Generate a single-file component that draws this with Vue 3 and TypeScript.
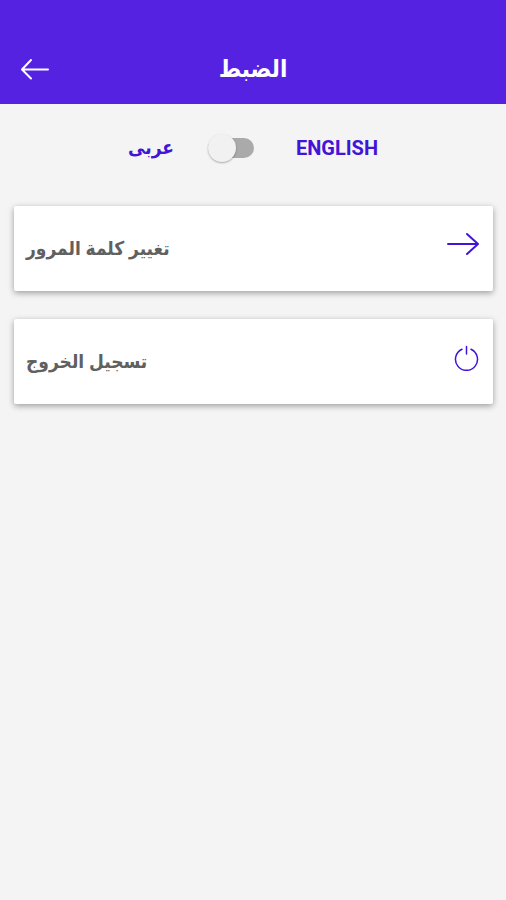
<script setup lang="ts">
import { ref } from 'vue'

const english = ref(false)
</script>

<template>
  <main class="screen" dir="ltr" lang="ar">
    <header class="bar">
      <button class="back" type="button" aria-label="رجوع">
        <svg width="30" height="22" viewBox="0 0 30 22" fill="none" stroke="currentColor" stroke-width="2" stroke-linecap="round" stroke-linejoin="round">
          <path d="M28 11.500H2M11 2L2 11.500l9 9" />
        </svg>
      </button>
      <h1 class="title" dir="rtl">الضبط</h1>
    </header>

    <div class="language">
      <label class="name arabic" for="language-switch" dir="rtl">عربى</label>
      <input id="language-switch" v-model="english" class="switch" type="checkbox" role="switch" />
      <label class="name" for="language-switch" lang="en">ENGLISH</label>
    </div>

    <div class="list">
      <button class="card" type="button">
        <span dir="rtl">تغيير كلمة المرور</span>
        <svg width="34" height="26" viewBox="0 0 34 26" fill="none" stroke="currentColor" stroke-width="2" stroke-linecap="round" stroke-linejoin="round">
          <path d="M3 12h30M22 2l11 10-11 10" />
        </svg>
      </button>
      <button class="card" type="button">
        <span dir="rtl">تسجيل الخروج</span>
        <svg width="26" height="26" viewBox="0 0 26 26" fill="none" stroke="currentColor" stroke-width="1.5" stroke-linecap="round">
          <path d="M13.500 1.500v7.500M9 4.300a11 11 0 1 0 9 0" />
        </svg>
      </button>
    </div>
  </main>
</template>

<style>
body {
  background: #f4f4f4;
}
</style>

<style scoped>
.screen {
  min-height: 100vh;
  background: #f4f4f4;
  color: #4314d8;
  font-family: Roboto, "DejaVu Sans Condensed", "DejaVu Sans", sans-serif;
}
.bar {
  display: grid;
  grid-template-columns: 52px 1fr 52px;
  align-items: center;
  box-sizing: border-box;
  height: 104px;
  padding-top: 34px;
  background: #5522e2;
  color: #fff;
}
.back {
  display: flex;
  justify-content: flex-end;
  padding: 0 2px;
  border: 0;
  background: none;
  color: inherit;
}
.title {
  margin: 0;
  font-size: 24px;
  line-height: 32px;
  font-weight: 700;
  text-align: center;
}
.language {
  display: flex;
  align-items: center;
  justify-content: center;
  height: 88px;
}
.name {
  font-size: 20px;
  line-height: 28px;
  font-weight: 700;
}
.arabic {
  font-size: 19px;
}
.switch {
  appearance: none;
  display: flex;
  align-items: center;
  width: 46px;
  height: 20px;
  margin: 0 42px 0 34px;
  border-radius: 10px;
  background: #aaa;
}
.switch::before {
  content: "";
  width: 28px;
  height: 28px;
  border-radius: 50%;
  background: #f1f1f1;
  box-shadow: 0 1px 2px rgba(0, 0, 0, 0.3);
}
.switch:checked {
  justify-content: flex-end;
}
.list {
  display: grid;
  gap: 28px;
  padding: 14px 13px 14px 14px;
}
.card {
  display: flex;
  align-items: center;
  justify-content: space-between;
  height: 85px;
  padding: 0 14px 0 12px;
  border: 0;
  border-radius: 2px;
  background: #fff;
  box-shadow: 0 2px 6px rgba(0, 0, 0, 0.36);
  color: #4314d8;
  font: inherit;
}
.card span {
  color: #606060;
  font-size: 19px;
  line-height: 28px;
  font-weight: 700;
}
.card svg {
  margin-bottom: 7px;
}
</style>
